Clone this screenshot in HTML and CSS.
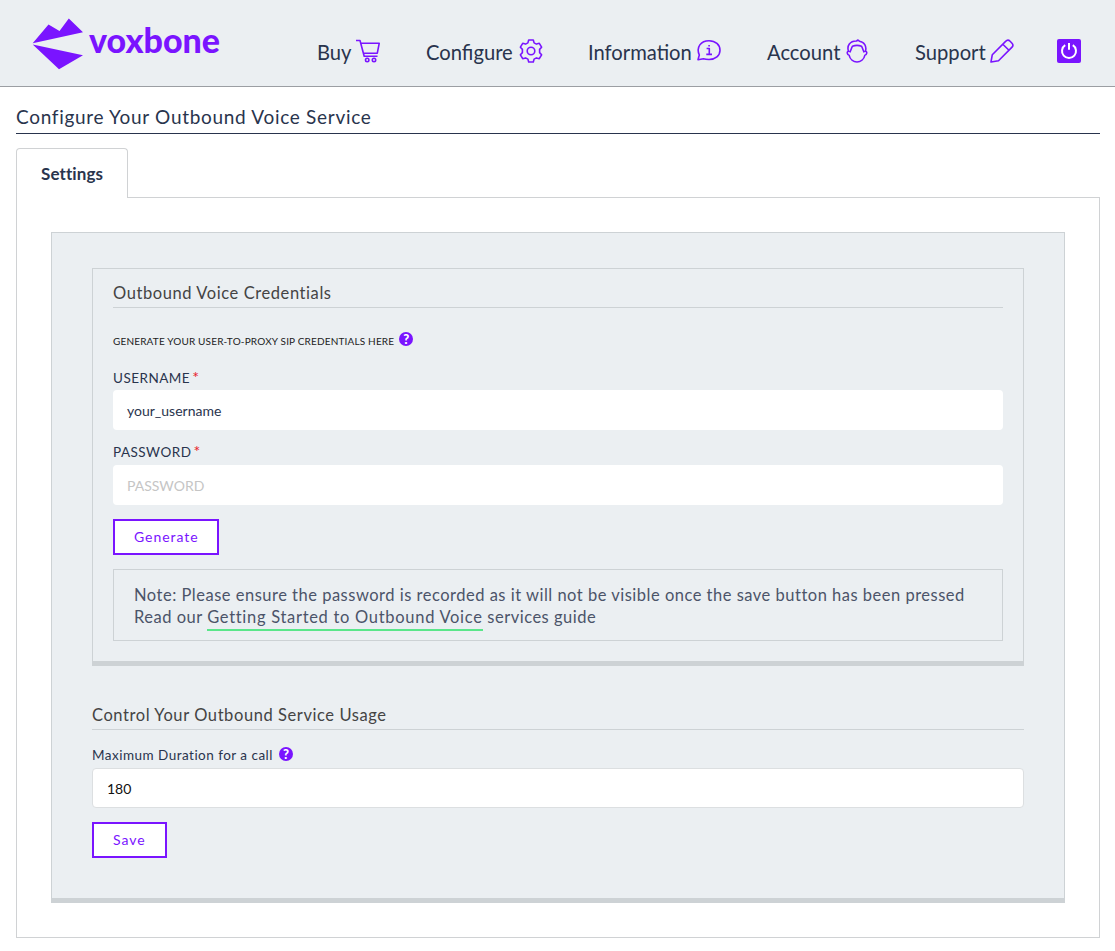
FILE: index.html
```html
<!DOCTYPE html>
<html lang="en">
<head>
<meta charset="utf-8">
<title>Configure Your Outbound Voice Service</title>
<link rel="stylesheet" href="styles.css">
</head>
<body>
<header class="header">
  <a class="logo"><svg width="200" height="60" viewBox="0 0 200 60" role="img" aria-label="voxbone">
    <path fill="#7a14ff" d="M.7 31.3 16.5 12.6 27.5 19 36.8 6.6 51 20.3ZM.7 32.5 51 43.3 27 57.3Z"/>
    <text class="logo-text" x="57" y="40.8" textLength="131" lengthAdjust="spacingAndGlyphs">voxbone</text>
  </svg></a>
  <nav class="nav">
    <a class="nav-item buy">Buy
      <svg width="24" height="24" viewBox="0 0 24 24"><path d="M0 1.5H4L8.2 17.3H21.5M4.7 4.3H23.2L21.3 14.2H7.5"/><circle cx="11.2" cy="21" r="1.7"/><circle cx="18" cy="21" r="1.7"/></svg></a>
    <a class="nav-item configure">Configure
      <svg width="24" height="24" viewBox="0 0 24 24"><path d="M9.7 1H14.3L15.1 3.9 17.4 5.1 20.3 4.3 22.6 8.2 20.6 10.4V13.6L22.6 15.8 20.3 19.7 17.4 18.9 15.1 20.1 14.3 23H9.7L8.9 20.1 6.6 18.9 3.7 19.7 1.4 15.8 3.4 13.6V10.4L1.4 8.2 3.7 4.3 6.6 5.1 8.9 3.9Z"/><circle cx="12" cy="12" r="3.8"/></svg></a>
    <a class="nav-item information">Information
      <svg width="24" height="24" viewBox="0 0 24 24"><path d="M1 20.7 2.3 16C-1.2 8 4 1.7 12 1.7 18.5 1.7 23 5.8 23 11.2S18.5 20.5 12 20.5C9.8 20.5 8 20.3 6.5 19.8Z"/><path d="M9.6 9.5H12.3V15M9.3 15.4H15M11.3 6.8H12.9"/></svg></a>
    <a class="nav-item account">Account
      <svg width="24" height="24" viewBox="0 0 24 24"><path d="M3.6 12.3C1.5 12.5 2 15.8 4.1 16.2 5 20.5 8.5 23 12 23S19 20.5 19.9 16.2C22 15.8 22.5 12.5 20.4 12.3 22 7.2 19.2 2.8 14.4 2.2L13 1 11.5 2C5 1.8 1.5 7 3.6 12.3ZM4.6 13.3C6 12 6.2 9 7.5 7.3 10.5 6 13.5 6 16.5 7.3 17.8 9 18 12 19.4 13.3"/></svg></a>
    <a class="nav-item support">Support
      <svg width="24" height="24" viewBox="0 0 24 24"><path d="M1 23 2.3 15.7 15.6 2.4C17.2.7 18.6.8 20.1 2.3L22 4.2C23.4 5.7 23.4 6.8 21.8 8.4L8.5 21.7ZM12.8 5.2 19 11.2"/></svg></a>
  </nav>
  <a class="power"><svg width="24" height="24" viewBox="0 0 24 24"><rect width="24" height="24" rx="2" fill="#7a14ff"/><path d="M8.2 6.2A7 7 0 1 0 15.8 6.2M12 4V10.8" fill="none" stroke="#fff" stroke-width="2"/></svg></a>
</header>
<main class="page">
  <h1 class="title"><span>Configure Your Outbound Voice Service</span></h1>
  <div class="tab">Settings</div>
  <section class="tab-body">
    <form class="panel">
      <div class="credentials">
        <h2 class="heading"><span>Outbound Voice Credentials</span></h2>
        <p class="hint"><span>GENERATE YOUR USER-TO-PROXY SIP CREDENTIALS HERE</span><span class="help">?</span></p>
        <label class="label"><span>USERNAME</span><span class="req">*</span></label>
        <div class="field"><span>your_username</span></div>
        <label class="label second"><span>PASSWORD</span><span class="req">*</span></label>
        <div class="field placeholder"><span>PASSWORD</span></div>
        <div class="button generate"><span>Generate</span></div>
        <div class="note">
          <div>Note: Please ensure the password is recorded as it will not be visible once the save button has been pressed</div>
          <div class="note-link"><span>Read our </span><a class="guide">Getting Started to Outbound Voice</a><span> services guide</span></div>
        </div>
      </div>
      <h2 class="heading usage"><span>Control Your Outbound Service Usage</span></h2>
      <label class="label duration"><span>Maximum Duration for a call</span><span class="help">?</span></label>
      <div class="field bordered"><span>180</span></div>
      <div class="button save"><span>Save</span></div>
    </form>
  </section>
</main>
</body>
</html>
```
FILE: styles.css
```css
* { box-sizing: border-box; }
body { margin: 0; background: #fff; color: #29344d; font-family: Lato, sans-serif; }
h1, h2, p { margin: 0; font-weight: 400; }
.header { height: 87px; background: #ebeff2; border-bottom: 1px solid #9b9ea3; display: flex; align-items: flex-start; padding-left: 32px; }
.logo { width: 285px; padding-top: 12px; height: 72px; }
.logo-text { font: 900 35px Lato, sans-serif; fill: #7a14ff; }
.nav { display: flex; padding-top: 39px; }
.nav-item { display: flex; justify-content: space-between; font-size: 20.2px; line-height: 26px; white-space: nowrap; }
.nav-item svg { fill: none; stroke: #7a14ff; stroke-width: 1.6; stroke-linejoin: round; }
.buy { width: 63px; margin-right: 46px; }
.configure { width: 117px; margin-right: 45px; }
.information { width: 133px; margin-right: 46px; }
.account { width: 102px; margin-right: 46px; }
.support { width: 99px; }
.power { margin: 39px 0 0 43px; height: 24px; }
.power svg, .logo svg { display: block; }
.page { padding: 0 15px 0 16px; }
.title { height: 47px; border-bottom: 1px solid #29344d; font-size: 19px; line-height: 60px; letter-spacing: .7px; }
.tab { position: relative; width: 112px; height: 50px; margin-top: 14px; border: 1px solid #d0d2d4; border-bottom: 0; border-radius: 4px 4px 0 0; background: #fff; font-weight: 700; font-size: 17px; line-height: 50px; padding-left: 24px; letter-spacing: .1px; }
.tab-body { margin-top: -1px; height: 741px; border: 1px solid #d0d2d4; padding: 34px; }
.panel { height: 671px; background: #ebeff2; border: 1px solid #cdd2d5; border-bottom-width: 5px; padding: 35px 40px 0; }
.credentials { height: 398px; border: 1px solid #cdd2d5; border-bottom-width: 5px; padding: 0 20px; }
.heading { height: 39px; border-bottom: 1px solid #cdd2d5; font-size: 16.5px; line-height: 48px; color: #444; letter-spacing: .58px; }
.hint { height: 58px; display: flex; align-items: center; padding-top: 7px; font-size: 10px; color: #222; letter-spacing: .17px; }
.help { display: inline-block; width: 14px; height: 14px; border-radius: 50%; background: #7a14ff; color: #fff; font: 900 13px/14px Lato, sans-serif; text-align: center; margin: -4px 0 0 5px; letter-spacing: 0; }
.label { display: flex; height: 24px; font-size: 13.5px; line-height: 24px; letter-spacing: .48px; }
.req { color: #e8202a; font-size: 16px; line-height: 22px; margin-left: 2px; }
.field { height: 40px; border-radius: 4px; background: #fff; padding-left: 14px; font-size: 14px; line-height: 42px; }
.second { height: 35px; line-height: 44px; }
.second .req { line-height: 42px; }
.placeholder { color: #c5c5c5; }
.button { height: 36px; border: 2px solid #7a14ff; background: #fff; color: #7a14ff; font-size: 14px; line-height: 32px; padding-left: 19px; letter-spacing: .95px; margin-top: 14px; }
.generate { width: 106px; }
.save { width: 75px; }
.note { height: 72px; margin-top: 14px; border: 1px solid #cdd2d5; padding: 14px 20px; font-size: 16.5px; line-height: 22px; letter-spacing: .5px; color: #4b5469; }
.note-link { display: flex; white-space: pre; }
.guide { border-bottom: 2px solid #5ae68a; height: 25px; letter-spacing: .7px; }
.usage { margin-top: 24px; height: 40px; line-height: 50px; }
.duration { height: 38px; line-height: 51px; align-items: flex-start; }
.duration .help { margin: 17px 0 0 6px; }
.bordered { border: 1px solid #dcdfe1; color: #111; line-height: 39px; }
```
